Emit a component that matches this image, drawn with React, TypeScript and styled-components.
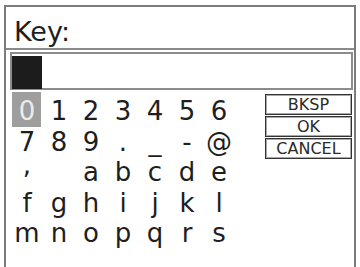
import styled, { createGlobalStyle } from 'styled-components';

const GlobalStyle = createGlobalStyle`
  html, body {
    margin: 0;
    padding: 0;
    background: #ffffff;
    overflow: hidden;
  }
  body {
    font-family: "DejaVu Sans", Verdana, sans-serif;
    color: #222222;
  }
`;

// keyboard layout, 7 keys per row
const rows = [
  ['0', '1', '2', '3', '4', '5', '6'],
  ['7', '8', '9', '.', '_', '-', '@'],
  [',', ' ', 'a', 'b', 'c', 'd', 'e'],
  ['f', 'g', 'h', 'i', 'j', 'k', 'l'],
  ['m', 'n', 'o', 'p', 'q', 'r', 's'],
];

const actions = ['BKSP', 'OK', 'CANCEL'];

export default function App() {
  const selected = '0';

  return (
    <>
      <GlobalStyle />
      <Frame>
        <Header>Key:</Header>
        <Body>
          <InputBox>
            <Cursor />
          </InputBox>
          <Keypad>
            <KeyGrid>
              {rows.flat().map((ch, idx) => (
                <Key key={idx} $active={ch === selected} $lift={ch === ','}>
                  {ch}
                </Key>
              ))}
            </KeyGrid>
            <Actions>
              {actions.map((label) => (
                <ActionButton key={label}>{label}</ActionButton>
              ))}
            </Actions>
          </Keypad>
        </Body>
      </Frame>
    </>
  );
}

const Frame = styled.div`
  box-sizing: border-box;
  margin: 5px 0 0 4px;
  width: 352px;
  height: 264px;
  border: 2px solid #7c7c7c;
  display: flex;
  flex-direction: column;
`;

const Header = styled.div`
  box-sizing: border-box;
  height: 43px;
  border-bottom: 2px solid #8a8a8a;
  padding: 6px 0 0 8px;
  font-size: 27px;
  line-height: 37px;
  color: #1e1e1e;
`;

const Body = styled.div`
  padding: 2px 1px 0 4px;
`;

const InputBox = styled.div`
  box-sizing: border-box;
  height: 38px;
  border: 2px solid #8c8c8c;
  padding: 2px 0 0 0;
`;

const Cursor = styled.div`
  width: 30px;
  height: 33px;
  background: #1c1c1c;
`;

const Keypad = styled.div`
  display: flex;
  align-items: flex-start;
  margin-top: 6px;
`;

const KeyGrid = styled.div`
  display: grid;
  grid-template-columns: repeat(7, 32px);
  grid-auto-rows: 30.5px;
  margin-left: 1px;
`;

const Key = styled.div<{ $active: boolean; $lift: boolean }>`
  position: relative;
  isolation: isolate;
  align-self: start;
  text-align: center;
  font-size: 26px;
  line-height: ${({ $lift }) => ($lift ? '16px' : '30.5px')};
  white-space: pre;
  color: ${({ $active }) => ($active ? '#ececec' : '#1e1e1e')};

  &::before {
    content: '';
    display: ${({ $active }) => ($active ? 'block' : 'none')};
    position: absolute;
    top: -4px;
    bottom: 0;
    left: 1px;
    right: 2px;
    background: #9e9e9e;
    z-index: -1;
  }
`;

const Actions = styled.div`
  display: flex;
  flex-direction: column;
  gap: 1px;
  margin: -2px 0 0 30px;
  width: 87px;
`;

const ActionButton = styled.div`
  box-sizing: border-box;
  height: 21px;
  border: 1px solid #333333;
  box-shadow: inset 0 0 0 1px #a8a8a8;
  text-align: center;
  font-size: 16px;
  line-height: 19px;
  color: #2a2a2a;
`;
